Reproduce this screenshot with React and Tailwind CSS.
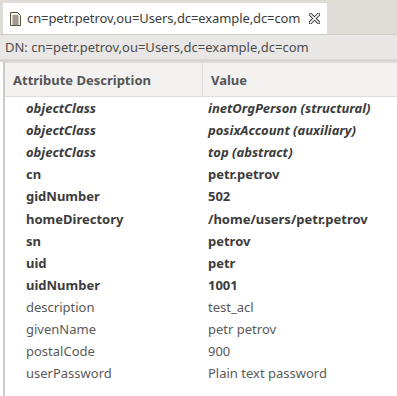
const rows = [
  { name: "objectClass", value: "inetOrgPerson (structural)", kind: "oc" },
  { name: "objectClass", value: "posixAccount (auxiliary)", kind: "oc" },
  { name: "objectClass", value: "top (abstract)", kind: "oc" },
  { name: "cn", value: "petr.petrov", kind: "must" },
  { name: "gidNumber", value: "502", kind: "must" },
  { name: "homeDirectory", value: "/home/users/petr.petrov", kind: "must" },
  { name: "sn", value: "petrov", kind: "must" },
  { name: "uid", value: "petr", kind: "must" },
  { name: "uidNumber", value: "1001", kind: "must" },
  { name: "description", value: "test_acl", kind: "may" },
  { name: "givenName", value: "petr petrov", kind: "may" },
  { name: "postalCode", value: "900", kind: "may" },
  { name: "userPassword", value: "Plain text password", kind: "may" },
];

const styleFor = (kind) => {
  if (kind === "oc") return "font-bold italic text-[#3c3c3c]";
  if (kind === "must") return "font-bold text-[#3c3c3c]";
  return "text-[#5a5a5a]";
};

const EntryIcon = () => (
  <svg width="11" height="14" viewBox="0 0 11 14" className="shrink-0">
    <path d="M0.5 0.5 H7.5 L10.5 3.5 V13.5 H0.5 Z" fill="#f4f1e8" stroke="#5b5340" />
    <path d="M2.5 4 H8.5 M2.5 6 H8.5 M2.5 8 H8.5 M2.5 10 H8.5 M2.5 12 H8.5" stroke="#4a4436" strokeWidth="1" />
  </svg>
);

const CloseIcon = () => (
  <svg width="11" height="11" viewBox="0 0 11 11" className="shrink-0">
    <path d="M1.5 1.5 L9.5 9.5 M9.5 1.5 L1.5 9.5" stroke="#333" strokeWidth="3.4" strokeLinecap="square" />
    <path d="M1.5 1.5 L9.5 9.5 M9.5 1.5 L1.5 9.5" stroke="#fff" strokeWidth="1.6" strokeLinecap="square" />
  </svg>
);

export default function App() {
  return (
    <div className="w-[397px] h-[396px] overflow-hidden bg-white text-[13px] font-['Noto_Sans',sans-serif]">
      <div className="h-[35px] bg-[#dfdcd8] border-b border-[#cfccc7] flex items-end pl-[3px]">
        <div className="w-[324px] h-[31px] bg-white flex items-center pl-[7px] gap-[6px] text-[#3c3c3c]">
          <EntryIcon />
          <span className="tracking-[-0.1px]">cn=petr.petrov,ou=Users,dc=example,dc=com</span>
          <span className="ml-[3px]"><CloseIcon /></span>
        </div>
      </div>
      <div className="h-[27px] bg-[#e8e7e5] border-b-[3px] border-[#d7d5d2] flex items-center pl-[5px] pt-[1px] text-[#4c4c4c]">
        DN: cn=petr.petrov,ou=Users,dc=example,dc=com
      </div>
      <div className="ml-[3px] border-l-2 border-[#cdcbc8] h-full">
        <div className="h-[35px] bg-[#f3f2f1] border-t border-[#e0dedb] border-b border-[#dedcd9] flex items-stretch font-bold text-[#555]">
          <div className="w-[198px] pl-[8px] pt-[3px] border-r border-[#dedcd9] flex items-center">Attribute Description</div>
          <div className="pl-[8px] pt-[3px] flex items-center">Value</div>
        </div>
        <div className="pt-[1px]">
          {rows.map((r, i) => (
            <div key={i} className="h-[22.05px] flex items-center">
              <div className={`w-[198px] pl-[21px] ${styleFor(r.kind)}`}>{r.name}</div>
              <div className={`pl-[5px] ${styleFor(r.kind)}`}>{r.value}</div>
            </div>
          ))}
        </div>
      </div>
    </div>
  );
}
